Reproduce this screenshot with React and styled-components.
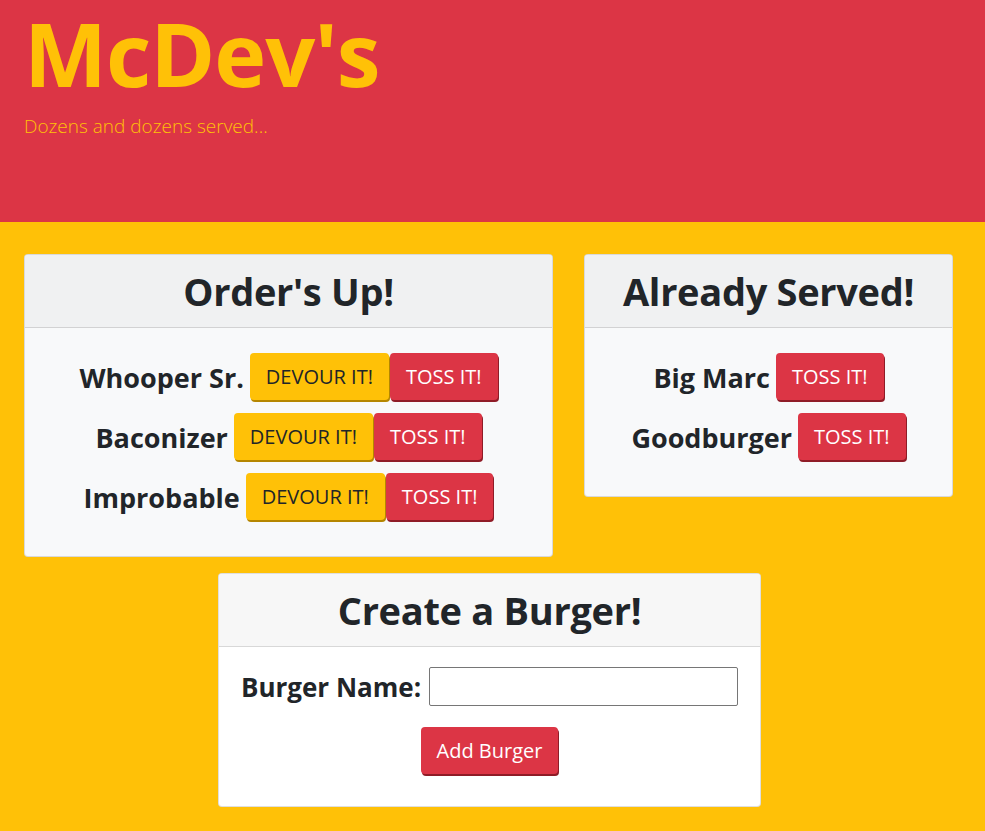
import React from "react";
import styled, { createGlobalStyle } from "styled-components";

const GlobalStyle = createGlobalStyle`
  html, body {
    margin: 0;
    padding: 0;
    background: #ffc107;
    font-family: "Open Sans", "Noto Sans", sans-serif;
    color: #212529;
  }
`;

const orders = ["Whooper Sr.", "Baconizer", "Improbable"];
const served = ["Big Marc", "Goodburger"];

const App = () => {
  return (
    <Page>
      <GlobalStyle />
      <Jumbo>
        <Title>McDev's</Title>
        <Lead>Dozens and dozens served...</Lead>
      </Jumbo>
      <Columns>
        <Card>
          <CardHeader>Order's Up!</CardHeader>
          <CardBody>
            {orders.map((name) => (
              <Row key={name}>
                <ItemName>{name}</ItemName>
                <Btn $variant="warning">DEVOUR IT!</Btn>
                <Btn $variant="danger">TOSS IT!</Btn>
              </Row>
            ))}
          </CardBody>
        </Card>
        <Card>
          <CardHeader>Already Served!</CardHeader>
          <CardBody>
            {served.map((name) => (
              <Row key={name}>
                <ItemName>{name}</ItemName>
                <Btn $variant="danger">TOSS IT!</Btn>
              </Row>
            ))}
          </CardBody>
        </Card>
      </Columns>
      <FormWrap>
        <FormCard>
          <CardHeader $plain>Create a Burger!</CardHeader>
          <FormBody>
            <FormRow>
              <Label htmlFor="burger">Burger Name:</Label>
              <Input id="burger" type="text" />
            </FormRow>
            <Btn $variant="danger" $caseless>
              Add Burger
            </Btn>
          </FormBody>
        </FormCard>
      </FormWrap>
    </Page>
  );
};

const Page = styled.div`
  min-height: 831px;
  background: #ffc107;
  padding-bottom: 26px;
`;

const Jumbo = styled.header`
  background: #dc3545;
  height: 222px;
  box-sizing: border-box;
  padding: 1px 24px 0;
`;

const Title = styled.h1`
  margin: 0;
  font-size: 88px;
  line-height: 1.2;
  font-weight: 700;
  color: #ffc107;
  letter-spacing: -1px;
`;

const Lead = styled.p`
  margin: 7px 0 0;
  font-size: 19px;
  line-height: 24px;
  font-weight: 300;
  color: #ffc107;
`;

const Columns = styled.div`
  display: grid;
  grid-template-columns: 529px 369px;
  column-gap: 31px;
  align-items: start;
  padding: 32px 32px 0 24px;
`;

const Card = styled.section`
  background: #f8f9fa;
  border: 1px solid rgba(0, 0, 0, 0.125);
  border-radius: 4px;
  overflow: hidden;
`;

const CardHeader = styled.h2`
  margin: 0;
  height: 72px;
  display: flex;
  align-items: center;
  justify-content: center;
  background: ${(p) => (p.$plain ? "#f7f7f7" : "#f0f1f2")};
  border-bottom: 1px solid rgba(0, 0, 0, 0.125);
  font-size: 38px;
  font-weight: 700;
  letter-spacing: -0.3px;
`;

const CardBody = styled.div`
  display: flex;
  flex-direction: column;
  align-items: center;
  gap: 11px;
  padding: 25px 20px 34px;
`;

const Row = styled.div`
  display: flex;
  align-items: center;
  gap: 1px;
`;

const ItemName = styled.h3`
  margin: 0 5px 0 0;
  font-size: 27px;
  font-weight: 700;
  line-height: 34px;
`;

const Btn = styled.button`
  height: 47px;
  padding: 0 16px;
  border: none;
  border-radius: 4px;
  font-family: "Open Sans", "Noto Sans", sans-serif;
  font-size: 20px;
  font-weight: 400;
  text-transform: ${(p) => (p.$caseless ? "none" : "uppercase")};
  cursor: pointer;
  background: ${(p) => (p.$variant === "warning" ? "#ffc107" : "#dc3545")};
  color: ${(p) => (p.$variant === "warning" ? "#212529" : "#fff")};
  box-shadow: 1px 2px 0
    ${(p) => (p.$variant === "warning" ? "#b58600" : "#8f1c27")};
  margin-bottom: 2px;
`;

const FormWrap = styled.div`
  display: flex;
  justify-content: center;
  padding: 16px 32px 0 26px;
`;

const FormCard = styled(Card)`
  width: 541px;
  flex-shrink: 0;
  background: #fff;
`;

const FormBody = styled.div`
  display: flex;
  flex-direction: column;
  align-items: center;
  gap: 21px;
  padding: 20px 10px 30px;
`;

const FormRow = styled.div`
  display: flex;
  align-items: center;
  gap: 8px;
`;

const Label = styled.label`
  white-space: nowrap;
  font-size: 26px;
  font-weight: 700;
  line-height: 34px;
`;

const Input = styled.input`
  width: 309px;
  height: 39px;
  flex-shrink: 0;
  box-sizing: border-box;
  border: 1px solid #767676;
  border-radius: 2px;
  padding: 1px 4px;
  font-size: 16px;
`;

export default App;
